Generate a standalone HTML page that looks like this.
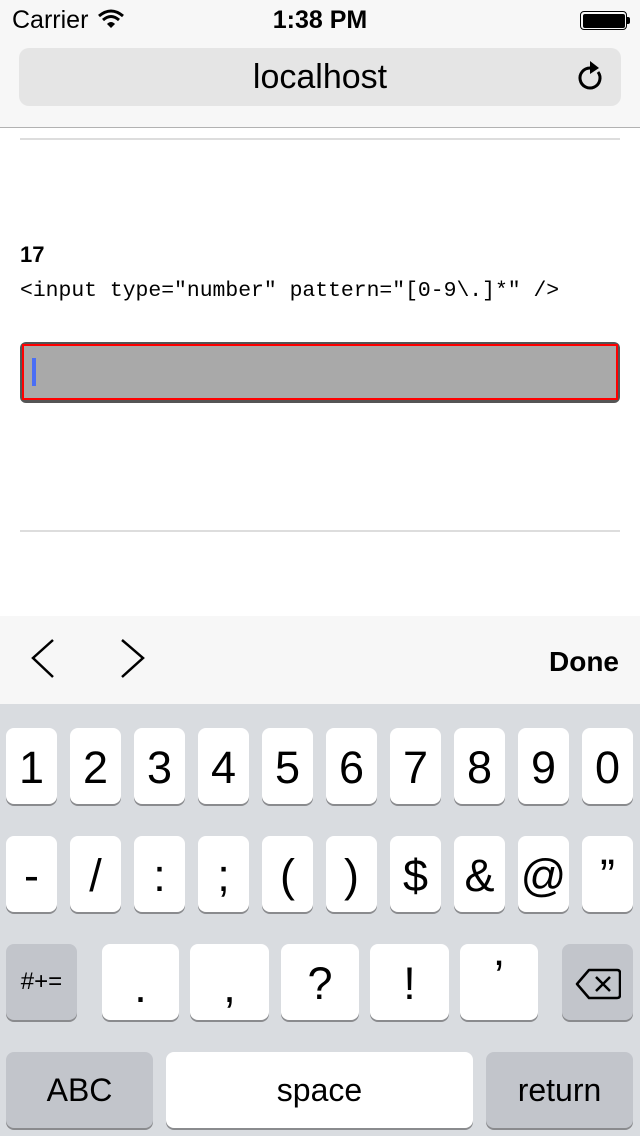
<!DOCTYPE html>
<html><head><meta charset="utf-8"><style>
*{margin:0;padding:0;box-sizing:border-box}
body{width:640px;height:1136px;position:relative;overflow:hidden;background:#fff;font-family:"Liberation Sans",sans-serif}
.a{position:absolute}
.k{position:absolute;background:#fff;border-radius:8px;box-shadow:0 2px 0 #8a8b8e;text-align:center;color:#000;font-size:45px;line-height:80px;height:76px}
.g{background:#c2c5cb}
</style></head><body>
<div class="a" style="left:0;top:0;width:640px;height:128px;background:#f7f7f7;border-bottom:1px solid #b2b2b2"></div>
<div class="a" style="left:12px;top:6px;font-size:25px;color:#000">Carrier</div>
<svg class="a" style="left:98px;top:9px" width="26" height="20" viewBox="0 0 26 20"><path d="M1 7Q13 -3 25 7" stroke="#000" stroke-width="3" fill="none"/><path d="M5 11Q13 4 21 11" stroke="#000" stroke-width="3" fill="none"/><path d="M9 15Q13 11 17 15L13 19Z" fill="#000"/></svg>
<div class="a" style="left:0;width:640px;top:6px;text-align:center;font-size:25px;font-weight:bold">1:38 PM</div>
<div class="a" style="left:580px;top:11px;width:47px;height:19px;border:1.5px solid #000;border-radius:4px;padding:1.5px"><div style="background:#000;height:100%;border-radius:2px"></div></div>
<div class="a" style="left:627px;top:17px;width:3px;height:7px;background:#000;border-radius:0 2px 2px 0"></div>
<div class="a" style="left:19px;top:48px;width:602px;height:58px;background:#e5e5e5;border-radius:10px"></div>
<div class="a" style="left:0;width:640px;top:58px;text-align:center;font-size:34px;color:#000">localhost</div>
<svg class="a" style="left:576px;top:60px" width="30" height="32" viewBox="0 0 30 32"><path d="M22 12A10 10 0 1 1 14 8" stroke="#000" stroke-width="3" fill="none"/><path d="M14 1L23 8L14 14Z" fill="#000"/></svg>
<div class="a" style="left:20px;top:138px;width:600px;height:2px;background:#ddd"></div>
<div class="a" style="left:20px;top:242px;font-size:22px;font-weight:bold">17</div>
<div class="a" style="left:20px;top:279px;font-family:'Liberation Mono',monospace;font-size:21.4px;white-space:pre">&lt;input type="number" pattern="[0-9\.]*" /&gt;</div>
<div class="a" style="left:20px;top:342px;width:600px;height:61px;background:#555;border-radius:6px"></div>
<div class="a" style="left:22px;top:344px;width:596px;height:56px;background:#a9a9a9;border:2px solid #f00"></div>
<div class="a" style="left:32px;top:358px;width:4px;height:28px;background:#4a6ef5"></div>
<div class="a" style="left:20px;top:530px;width:600px;height:2px;background:#ddd"></div>
<div class="a" style="left:0;top:616px;width:640px;height:88px;background:#f7f7f7"></div>
<svg class="a" style="left:20px;top:636px" width="130" height="46" viewBox="0 0 130 46"><path d="M33 4L13 22L33 41" stroke="#000" stroke-width="2.5" fill="none"/><path d="M102 4L123 22L102 41" stroke="#000" stroke-width="2.5" fill="none"/></svg>
<div class="a" style="left:549px;top:646px;font-size:28px;font-weight:bold">Done</div>
<div class="a" style="left:0;top:704px;width:640px;height:432px;background:#d9dce0"></div>
<div class="k" style="left:6px;top:728px;width:51px">1</div>
<div class="k" style="left:70px;top:728px;width:51px">2</div>
<div class="k" style="left:134px;top:728px;width:51px">3</div>
<div class="k" style="left:198px;top:728px;width:51px">4</div>
<div class="k" style="left:262px;top:728px;width:51px">5</div>
<div class="k" style="left:326px;top:728px;width:51px">6</div>
<div class="k" style="left:390px;top:728px;width:51px">7</div>
<div class="k" style="left:454px;top:728px;width:51px">8</div>
<div class="k" style="left:518px;top:728px;width:51px">9</div>
<div class="k" style="left:582px;top:728px;width:51px">0</div>
<div class="k" style="left:6px;top:836px;width:51px">-</div>
<div class="k" style="left:70px;top:836px;width:51px">/</div>
<div class="k" style="left:134px;top:836px;width:51px">:</div>
<div class="k" style="left:198px;top:836px;width:51px">;</div>
<div class="k" style="left:262px;top:836px;width:51px">(</div>
<div class="k" style="left:326px;top:836px;width:51px">)</div>
<div class="k" style="left:390px;top:836px;width:51px">$</div>
<div class="k" style="left:454px;top:836px;width:51px">&amp;</div>
<div class="k" style="left:518px;top:836px;width:51px">@</div>
<div class="k" style="left:582px;top:836px;width:51px">”</div>
<div class="k g" style="left:6px;top:944px;width:71px;font-size:24px;line-height:76px">#+=</div>
<div class="k" style="left:102px;top:944px;width:77px;line-height:86px">.</div>
<div class="k" style="left:190px;top:944px;width:79px;line-height:86px">,</div>
<div class="k" style="left:281px;top:944px;width:78px">?</div>
<div class="k" style="left:370px;top:944px;width:79px">!</div>
<div class="k" style="left:460px;top:944px;width:78px;line-height:66px">’</div>
<div class="k g" style="left:562px;top:944px;width:71px"><svg style="margin-top:24px" width="46" height="32" viewBox="0 0 46 32"><path d="M14 2H42Q45 2 45 5V27Q45 30 42 30H14L2 16Z" stroke="#000" stroke-width="2.5" fill="none" stroke-linejoin="round"/><path d="M21 9L35 23M35 9L21 23" stroke="#000" stroke-width="2.5"/></svg></div>
<div class="k g" style="left:6px;top:1052px;width:147px;font-size:32px;line-height:76px">ABC</div>
<div class="k" style="left:166px;top:1052px;width:307px;font-size:32px;line-height:76px">space</div>
<div class="k g" style="left:486px;top:1052px;width:147px;font-size:32px;line-height:76px">return</div>
</body></html>
